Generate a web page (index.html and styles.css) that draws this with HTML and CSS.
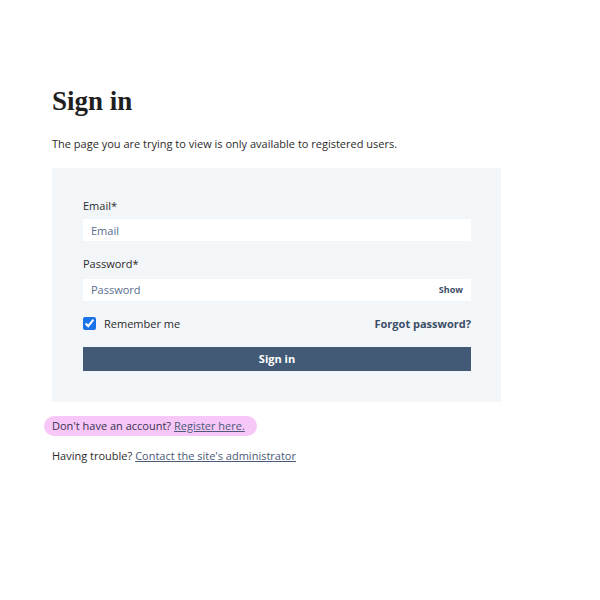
FILE: index.html
```html
<!DOCTYPE html>
<html lang="en">
<head>
  <meta charset="UTF-8" />
  <meta name="viewport" content="width=device-width, initial-scale=1.0" />
  <title>Sign in</title>
  <link rel="stylesheet" href="styles.css">
</head>
<body>
  <div class="page">
    <h1>Sign in</h1>
    <p class="intro">The page you are trying to view is only available to registered users.</p>

    <form class="login-box">
      <label class="field-label" for="email">Email*</label>
      <input class="field" type="text" id="email" placeholder="Email" />

      <label class="field-label" for="password">Password*</label>
      <div class="password-wrap">
        <input class="field" type="password" id="password" placeholder="Password" />
        <span class="show-btn">Show</span>
      </div>

      <div class="options-row">
        <label class="remember"><input type="checkbox" checked /> Remember me</label>
        <a class="forgot" href="#">Forgot password?</a>
      </div>

      <button type="submit" class="submit-btn">Sign in</button>
    </form>

    <p class="register"><span class="pill">Don't have an account? <a href="#">Register here.</a></span></p>
    <p class="trouble">Having trouble? <a href="#">Contact the site's administrator</a></p>
  </div>
</body>
</html>
```

FILE: styles.css
```css
body {
  margin: 0;
  font-family: "Open Sans", Arial, sans-serif;
  color: #2b2b2b;
  background: #ffffff;
}

.page {
  width: 449px;
  padding: 84px 0 0 52px;
}

h1 {
  font-family: "Liberation Serif", "DejaVu Serif", serif;
  font-size: 27px;
  font-weight: bold;
  color: #1f1f1f;
  margin: 0 0 18px;
  line-height: 34px;
}

.intro {
  font-size: 11px;
  margin: 0 0 16px;
  line-height: 16px;
}

.login-box {
  background: #f3f6f9;
  padding: 30px 30px 31px 31px;
  display: flex;
  flex-direction: column;
}

.field-label {
  font-size: 11px;
  line-height: 15px;
  margin-bottom: 6px;
}

.field {
  border: none;
  background: #ffffff;
  height: 22px;
  padding: 0 8px;
  font-family: inherit;
  font-size: 11px;
  color: #333;
  outline: none;
  box-sizing: border-box;
  width: 100%;
}

.field::placeholder {
  color: #5a6f90;
}

.login-box > .field {
  margin-bottom: 15px;
}

.password-wrap {
  position: relative;
}

.show-btn {
  position: absolute;
  right: 8px;
  top: 6px;
  font-size: 9px;
  font-weight: bold;
  color: #3b4d66;
}

.options-row {
  display: flex;
  justify-content: space-between;
  align-items: center;
  margin: 15px 0 16px;
}

.remember {
  display: flex;
  align-items: center;
  font-size: 11px;
  gap: 8px;
}

.remember input {
  margin: 0;
  width: 13px;
  height: 13px;
  accent-color: #1a73e8;
}

.forgot {
  font-size: 11px;
  font-weight: bold;
  color: #3b4d66;
  text-decoration: none;
}

.submit-btn {
  height: 24px;
  border: none;
  background: #435a77;
  color: #ffffff;
  font-family: inherit;
  font-size: 11px;
  font-weight: bold;
  cursor: pointer;
}

.register {
  margin: 14px 0 0 -8px;
  font-size: 11px;
}

.pill {
  display: inline-block;
  background: #f7c8f7;
  border-radius: 10px;
  padding: 2px 12px 2px 8px;
  line-height: 16px;
  color: #3a3050;
}

.register a,
.trouble a {
  color: #4a5a78;
}

.trouble {
  margin: 12px 0 0;
  font-size: 11px;
  line-height: 16px;
}
```
